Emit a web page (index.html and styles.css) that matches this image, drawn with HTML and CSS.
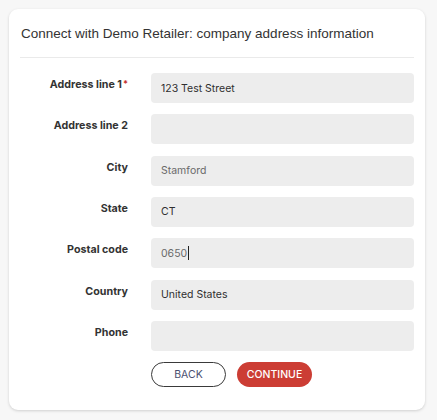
FILE: index.html
```html
<!DOCTYPE html>
<html lang="en">
<head>
<meta charset="utf-8">
<title>Company address information</title>
<link rel="stylesheet" href="styles.css">
</head>
<body>
<div class="card">
  <div class="card-header">
    <h1 class="title">Connect with Demo Retailer: company address information</h1>
  </div>
  <form class="form">
    <div class="grid">
      <label class="label">Address line 1<span class="req">*</span></label>
      <div class="field">123 Test Street</div>

      <label class="label">Address line 2</label>
      <div class="field"></div>

      <label class="label">City</label>
      <div class="field muted">Stamford</div>

      <label class="label">State</label>
      <div class="field">CT</div>

      <label class="label">Postal code</label>
      <div class="field muted">0650<span class="caret"></span></div>

      <label class="label">Country</label>
      <div class="field">United States</div>

      <label class="label">Phone</label>
      <div class="field"></div>

      <div class="spacer"></div>
      <div class="actions">
        <button type="button" class="btn btn-back">BACK</button>
        <button type="button" class="btn btn-continue">CONTINUE</button>
      </div>
    </div>
  </form>
</div>
</body>
</html>
```

FILE: styles.css
```css
* { box-sizing: border-box; }

html, body {
  margin: 0;
  padding: 0;
}

body {
  background: #f7f7f7;
  padding: 9px;
  font-family: "Inter", "Liberation Sans", sans-serif;
}

.card {
  width: 416px;
  height: 401px;
  background: #ffffff;
  border-radius: 9px;
  box-shadow: 0 1px 3px rgba(0, 0, 0, 0.16);
  padding: 0 11px;
}

.card-header {
  padding: 17px 0 15px 1px;
  border-bottom: 1px solid #eaeaea;
}

.title {
  margin: 0;
  font-family: "Liberation Sans", Arial, sans-serif;
  font-weight: 400;
  font-size: 13.5px;
  line-height: 16px;
  color: #333333;
}

.form {
  padding-top: 15px;
}

.grid {
  display: grid;
  grid-template-columns: 108px 263px;
  column-gap: 23px;
  row-gap: 11.33px;
}

.label {
  text-align: right;
  font-size: 10.7px;
  font-weight: 700;
  color: #333333;
  line-height: 14px;
  padding-top: 5px;
}

.req {
  color: #c4302b;
  font-size: 9px;
  vertical-align: top;
  position: relative;
  top: -1px;
  margin-left: 1px;
}

.field {
  height: 30px;
  background: #ededed;
  border-radius: 4px;
  padding: 0 10px;
  display: flex;
  align-items: center;
  font-size: 10.5px;
  color: #2f2f2f;
}

.field.muted {
  color: #6a6a6a;
}

.caret {
  display: inline-block;
  width: 1px;
  height: 14px;
  background: #222;
  margin-left: 1px;
}

.actions {
  display: flex;
  gap: 11px;
}

.btn {
  height: 25px;
  width: 75px;
  border-radius: 13px;
  font-family: "Inter", "Liberation Sans", sans-serif;
  font-size: 10.5px;
  padding: 0;
  cursor: pointer;
}

.btn-back {
  background: #ffffff;
  border: 1px solid #3a3a3a;
  color: #4b5070;
  font-weight: 400;
}

.btn-continue {
  background: #cc3d34;
  border: none;
  color: #ffffff;
  font-weight: 500;
}
```
